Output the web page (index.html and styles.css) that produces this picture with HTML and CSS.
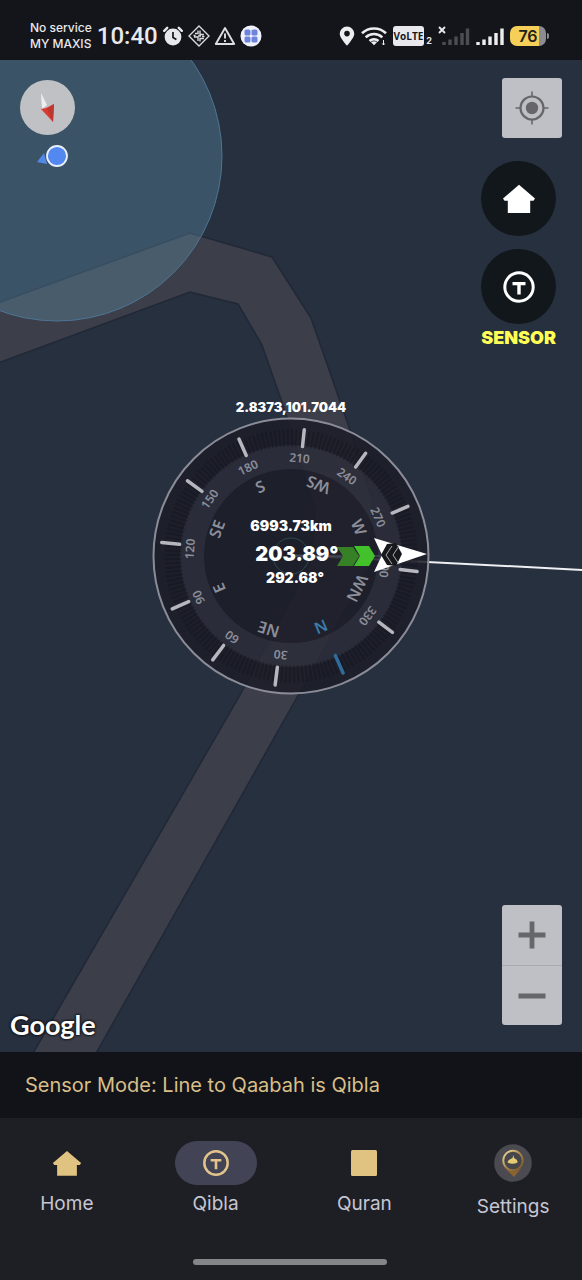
FILE: index.html
```html
<!DOCTYPE html>
<html lang="en">
<head>
<meta charset="utf-8">
<meta name="viewport" content="width=device-width, initial-scale=1">
<title>Qibla</title>
<link rel="stylesheet" href="styles.css">
</head>
<body>
<div class="app">
  <header class="status">
    <div class="status-group">
      <div class="carrier"><span>No service</span><span>MY MAXIS</span></div>
      <time class="clock">10:40</time>
      <svg class="i-alarm" width="20" height="20" viewBox="0 0 20 20" aria-hidden="true"><circle cx="10" cy="11" r="8.4" fill="#e8e8ec"/><path d="M1.200 4.800 4.200 1.800M18.800 4.800 15.800 1.800" stroke="#e8e8ec" stroke-width="2.400" stroke-linecap="round"/><path d="M10 6v5.500l3.400 2" fill="none" stroke="#14151a" stroke-width="1.700"/></svg>
      <svg width="22" height="22" viewBox="0 0 22 22" fill="none" stroke="#d9d9de" stroke-width="1.400" aria-hidden="true"><path d="m11 1 10 10-10 10L1 11z"/><path d="M7 8.500h3v-3M12 5.500v4h4M6 12h4v4M12 16.500v-3h4M5.500 10.500h2M10 11h3M14 11.500h2.500"/></svg>
      <svg width="22" height="20" viewBox="0 0 22 20" fill="none" stroke="#dedee2" stroke-width="1.900" aria-hidden="true"><path d="M11 2 20.200 18H1.800z" stroke-linejoin="round"/><path d="M11 7.500v5M11 14v2"/></svg>
      <svg width="22" height="22" viewBox="0 0 22 22" aria-hidden="true"><circle cx="11" cy="11" r="10.500" fill="#f0f2fb"/><g fill="#6d84dc"><rect x="4.500" y="4.500" width="6" height="6" rx="1.500"/><rect x="11.500" y="4.500" width="6" height="6" rx="1.500"/><rect x="4.500" y="11.500" width="6" height="6" rx="1.500"/><rect x="11.500" y="11.500" width="6" height="6" rx="1.500"/></g></svg>
    </div>
    <div class="status-group signals">
      <svg width="16" height="20" viewBox="0 0 16 20" aria-hidden="true"><path fill="#ededf0" fill-rule="evenodd" d="M8 .5a7.300 7.300 0 0 0-7.300 7.300C.7 12 8 19.700 8 19.700s7.300-7.700 7.300-11.900A7.300 7.300 0 0 0 8 .5M8 4.800a2.800 2.800 0 1 1 0 5.600 2.800 2.800 0 0 1 0-5.600"/></svg>
      <svg width="26" height="20" viewBox="0 0 26 20" fill="none" stroke="#ededf0" stroke-width="2.600" aria-hidden="true"><path d="M1 7.200a17.500 17.500 0 0 1 24 0M4.700 11.400a12 12 0 0 1 16.600 0M8.500 15a7 7 0 0 1 9 0"/><path d="m10 16.200 3 3 3-3q-3-2-6 0z" fill="#ededf0" stroke="none"/><path d="M22.500 14v5M21.300 17.500l1.200 1.500 1.200-1.500" stroke-width="1"/></svg>
      <span class="volte">VoLTE</span><sub class="sim">2</sub>
      <svg width="32" height="20" viewBox="0 0 32 20" aria-hidden="true"><path d="m1 1 6 6M7 1 1 7" stroke="#e8e8ec" stroke-width="1.900"/><path d="M6 16v3M12 13.500V19M18 10.500V19M24 7v12M29.500 2.500V19" stroke="#4c4d52" stroke-width="3.400"/></svg>
      <svg width="28" height="20" viewBox="0 0 28 20" aria-hidden="true"><path d="M2 16v3M8 13.500V19M14 10.500V19M20 7v12M26 2.500V19" stroke="#ededf0" stroke-width="3.400"/></svg>
      <span class="battery">76</span>
    </div>
  </header>

  <main class="map">
    <svg class="map-art" viewBox="0 0 582 992" preserveAspectRatio="xMidYMid slice" aria-hidden="true">
      <rect width="582" height="992" fill="#27303f"/>
      <path d="M-2 243 190 173 272 197 311 258 350 370 372 440 370 505 300 632 95 995H32L240 635 312 500 315 450 283 345 262 285 238 244 190 232-2 303z" fill="#3c3e49" stroke="#212838" stroke-width="1.500"/>
      <circle cx="57" cy="96" r="165" fill="#6296b0" fill-opacity=".35" stroke="#4d7594" stroke-width="1"/>
      <path d="M291 495 584 510" stroke="#eef0f3" stroke-width="2"/>
      <path d="m37 102 7-9 3 11z" fill="#5288e8"/>
      <circle cx="57" cy="96" r="10" fill="#5288f0" stroke="#e9f0fc" stroke-width="1.800"/>
    </svg>

    <button class="north" aria-label="Reset to north"><svg width="55" height="55" viewBox="0 0 55 55"><path d="m21 13 6 12-5 4z" fill="#eeeef0"/><path d="m21 29 5-1 8-4-1 18z" fill="#d93a31"/><path d="m27 29 7-5-1 18z" fill="#bd3630"/></svg></button>

    <div class="side">
      <button class="tile locate" aria-label="My location"><svg width="34" height="34" viewBox="0 0 34 34"><circle cx="17" cy="17" r="11.500" fill="none" stroke="#67676b" stroke-width="2.200"/><circle cx="17" cy="17" r="6.200" fill="#67676b"/><path d="M17 .5V6M17 28v5.500M.5 17H6M28 17h5.500" stroke="#67676b" stroke-width="1.600"/></svg></button>
      <button class="round" aria-label="Home"><svg width="34" height="30" viewBox="0 0 34 30"><path d="M17 .8 33 14.500l-1.500 2.200h-3.300V29H5.800V16.700H2.500L1 14.500z" fill="#fff"/></svg></button>
      <button class="round" aria-label="Sensor mode"><svg width="34" height="34" viewBox="0 0 34 34" fill="none" stroke="#fff"><circle cx="17" cy="17" r="14.200" stroke-width="3"/><path d="M10.500 13.600h13M17 13.500v11" stroke-width="3.400"/></svg></button>
      <span class="sensor">SENSOR</span>
    </div>

    <section class="compass" aria-label="Compass">
      <svg class="dial" viewBox="-139 -139 278 278" aria-hidden="true">
        <circle r="137" fill="#1c1d28" fill-opacity=".86"/>
        <circle r="99" fill="none" stroke="#6b6e7c" stroke-opacity=".18" stroke-width="24"/>
        <circle r="118" fill="none" stroke="#10111a" stroke-opacity=".35" stroke-width="17" pathLength="360" stroke-dasharray="1 1"/>
        <circle r="137.500" fill="none" stroke="#8b8c98" stroke-width="2"/>
        <circle r="18" fill="none" stroke="#2c4a50" stroke-width="1"/>
        <path d="M0 0H90" stroke="#555964" stroke-width="1"/>
        <g stroke="#b5b6be" stroke-width="3.500" stroke-linecap="round">
          <path d="M0-128v19" transform="rotate(156)" stroke="#2f6c9b"/>
          <path d="M0-130v18" transform="rotate(187)"/>
          <path d="M0-130v18" transform="rotate(217)"/>
          <path d="M0-130v18" transform="rotate(246)"/>
          <path d="M0-130v18" transform="rotate(276)"/>
          <path d="M0-128v18" transform="rotate(306)"/>
          <path d="M0-128v18" transform="rotate(336)"/>
          <path d="M0-127v17" transform="rotate(6)"/>
          <path d="M0-127v17" transform="rotate(36)"/>
          <path d="M0-127v17" transform="rotate(67)"/>
          <path d="M0-127v17" transform="rotate(97)"/>
          <path d="M0-127v17" transform="rotate(127)"/>
        </g>
        <g class="degrees">
          <text y="-95" transform="rotate(186)">30</text>
          <text y="-96" transform="rotate(216)">60</text>
          <text y="-97" transform="rotate(246)">90</text>
          <text y="-97" transform="rotate(274)">120</text>
          <text y="-95" transform="rotate(305)">150</text>
          <text y="-94" transform="rotate(334)">180</text>
          <text y="-94" transform="rotate(5)">210</text>
          <text y="-93" transform="rotate(35)">240</text>
          <text y="-91" transform="rotate(66)">270</text>
          <text y="-90" transform="rotate(97)">300</text>
          <text y="-93" transform="rotate(128)">330</text>
        </g>
        <g class="points">
          <text y="-71" transform="rotate(157)" class="n">N</text>
          <text y="-71" transform="rotate(197)">NE</text>
          <text y="-73" transform="rotate(246)">E</text>
          <text y="-73" transform="rotate(290)">SE</text>
          <text y="-70" transform="rotate(336)">S</text>
          <text y="82" transform="rotate(201)">WS</text>
          <text y="-68" transform="rotate(67)">W</text>
          <text y="-68" transform="rotate(116)">WN</text>
        </g>
        <path d="M83-18 136-2 83 16 91-1z" fill="#fff"/>
        <path d="m96-12 9-1 6 11-6 12-9-1-6-10z" fill="#17181b"/>
        <path d="m101-10-6 9 6 9M108-10l-6 9 6 9" fill="none" stroke="#a9abb0" stroke-width="1"/>
        <path d="M46-9h16l6 9-6 10H46l6-10z" fill="#368026"/>
        <path d="M63-10h15l6 10-6 10H63l6-10z" fill="#43c12b"/>
      </svg>
      <div class="readout">
        <span>6993.73km</span>
        <strong>203.89°</strong>
        <span>292.68°</span>
      </div>
      <span class="coords">2.8373,101.7044</span>
    </section>

    <span class="google">Google</span>
    <div class="zoom">
      <button aria-label="Zoom in"><svg width="28" height="28" viewBox="0 0 28 28"><path d="M.5 14h27M14 .5v27" stroke="#67676b" stroke-width="4.800"/></svg></button>
      <button aria-label="Zoom out"><svg width="28" height="28" viewBox="0 0 28 28"><path d="M.5 14h27" stroke="#67676b" stroke-width="4.800"/></svg></button>
    </div>
  </main>

  <p class="message">Sensor Mode: Line to Qaabah is Qibla</p>

  <footer class="bottom">
    <nav class="tabs">
      <a class="tab" href="#home"><span class="pill"><svg width="30" height="27" viewBox="0 0 34 30"><path d="M17 .8 33 14.500l-1.500 2.200h-3.300V29H5.800V16.700H2.500L1 14.500z" fill="#e1c381"/></svg></span>Home</a>
      <a class="tab" href="#qibla" aria-current="page"><span class="pill active"><svg width="28" height="28" viewBox="0 0 34 34" fill="none" stroke="#e3c58c"><circle cx="17" cy="17" r="14.200" stroke-width="3"/><path d="M10.500 13.600h13M17 13.500v11" stroke-width="3.200"/></svg></span>Qibla</a>
      <a class="tab" href="#quran"><span class="pill"><svg width="26" height="26" viewBox="0 0 26 26"><rect width="26" height="26" rx="1.500" fill="#e1c381"/></svg></span>Quran</a>
      <a class="tab tall" href="#settings"><span class="pill"><svg width="38" height="38" viewBox="0 0 38 38"><defs><linearGradient id="gold" x1="0" y1="0" x2="1" y2="1"><stop offset="0" stop-color="#f3e3a0"/><stop offset=".5" stop-color="#ab8748"/><stop offset="1" stop-color="#755127"/></linearGradient></defs><circle cx="19" cy="19" r="18.800" fill="#4a4a50"/><path d="M10.500 24q8.500 6.500 17 0L20 33z" fill="#8a6330"/><circle cx="19" cy="16.500" r="9.700" fill="#46454a" stroke="url(#gold)" stroke-width="1.900"/><path d="M13.500 18.500q0-2.500 5-4.500l.8-3 .8 3q4 2 3.400 4.500-5 2.500-10 0" fill="#e5cb75"/></svg></span>Settings</a>
    </nav>
    <div class="handle"></div>
  </footer>
</div>
</body>
</html>
```
FILE: styles.css
```css
* { box-sizing: border-box; }
body { margin: 0; background: #1e1f24; font-family: Inter, "Open Sans", sans-serif; }
button { border: 0; padding: 0; cursor: pointer; display: grid; place-items: center; }
svg { display: block; flex: none; }
.app { min-height: 100vh; display: flex; flex-direction: column; }

.status { display: flex; justify-content: space-between; align-items: center; padding: 12px 36px 0 30px; height: 60px; background: #14151a; color: #e9e9ed; }
.status-group { display: flex; align-items: center; gap: 4px; }
.carrier { display: flex; flex-direction: column; font: 500 12px/16px Inter, sans-serif; white-space: nowrap; }
.clock { font: 500 24px/28px Roboto, sans-serif; margin-left: 1px; }
.i-alarm { margin: 0 1px; }
.signals { gap: 6px; }
.volte { background: #e9e9ed; color: #17181d; border-radius: 3px; padding: 0 1px; font: 700 10px/20px "Open Sans", sans-serif; }
.sim { font: 700 9px/10px Inter, sans-serif; align-self: flex-end; margin: 0 0 0 -4px; }
.battery { position: relative; width: 36px; border-radius: 7px; background: linear-gradient(90deg, #f5cf58 80%, #8b8b90 80%); color: #22201b; font: 600 16px/20px Inter, sans-serif; text-align: center; }
.battery::after { content: ""; position: absolute; left: 37px; top: 7px; width: 2px; height: 6px; border-radius: 0 2px 2px 0; background: #8b8b90; }

.map { flex: 1; position: relative; min-height: 700px; overflow: hidden; display: grid; place-items: center; background: #27303f; }
.map-art { position: absolute; inset: 0; width: 100%; height: 100%; }
.north { position: absolute; left: 20px; top: 20px; border-radius: 50%; background: #bfc1c5; }
.side { position: absolute; right: 20px; top: 18px; display: flex; flex-direction: column; align-items: flex-end; }
.tile { width: 60px; height: 60px; border-radius: 3px; background: #bfc0c5; }
.locate { margin-bottom: 23px; }
.round { width: 75px; height: 75px; margin: 0 6px 13px 0; border-radius: 50%; background: #11171b; }
.sensor { margin: -11px 6px 0 0; color: #ffff55; font: 900 18px/24px Inter, sans-serif; }

.compass { position: relative; display: grid; place-items: center; width: 278px; }
.dial { grid-area: 1 / 1; width: 100%; }
.dial text { text-anchor: middle; font-family: "Noto Sans", sans-serif; }
.degrees { font-size: 12px; font-weight: 600; fill: #8c8e99; }
.points { font-size: 16px; font-weight: 600; fill: #8c8e99; }
.points .n { fill: #3b7caa; }
.readout { grid-area: 1 / 1; position: relative; display: flex; flex-direction: column; align-items: center; color: #fff; font: 900 14px/22px Inter, sans-serif; padding-bottom: 12px; }
.readout strong { font-size: 20px; line-height: 34px; font-weight: 900; padding-left: 12px; }
.readout span:last-child { padding-left: 8px; line-height: 14px; }
.coords { position: absolute; bottom: 100%; color: #fff; font: 900 13px/20px Inter, sans-serif; }

.google { position: absolute; left: 10px; bottom: 9px; color: #fff; font: 700 27px/36px Lato, sans-serif; text-shadow: 0 0 3px #111, 0 0 2px #111, 0 0 2px #111; }
.zoom { position: absolute; right: 20px; bottom: 27px; width: 60px; border-radius: 3px; overflow: hidden; background: #bfc0c5; }
.zoom button { width: 100%; height: 60px; background: none; }
.zoom button + button { border-top: 1px solid #aaabb0; }

.message { margin: 0; padding: 19px 25px; background: #121318; color: #d8bf88; font-size: 20px; line-height: 28px; }
.bottom { background: #1e1f24; padding: 23px 2px 15px 0; }
.tabs { display: grid; grid-template-columns: repeat(4, 1fr); gap: 15px; height: 114px; }
.tab { display: flex; flex-direction: column; align-items: center; gap: 6px; color: #c5c6d3; text-decoration: none; font-size: 19px; line-height: 26px; }
.pill { display: grid; place-items: center; width: 82px; height: 44px; border-radius: 22px; }
.active { background: #424455; }
.tall { gap: 9px; }
.handle { width: 194px; height: 6px; margin: 4px auto 0; border-radius: 3px; background: #85868a; }
```
